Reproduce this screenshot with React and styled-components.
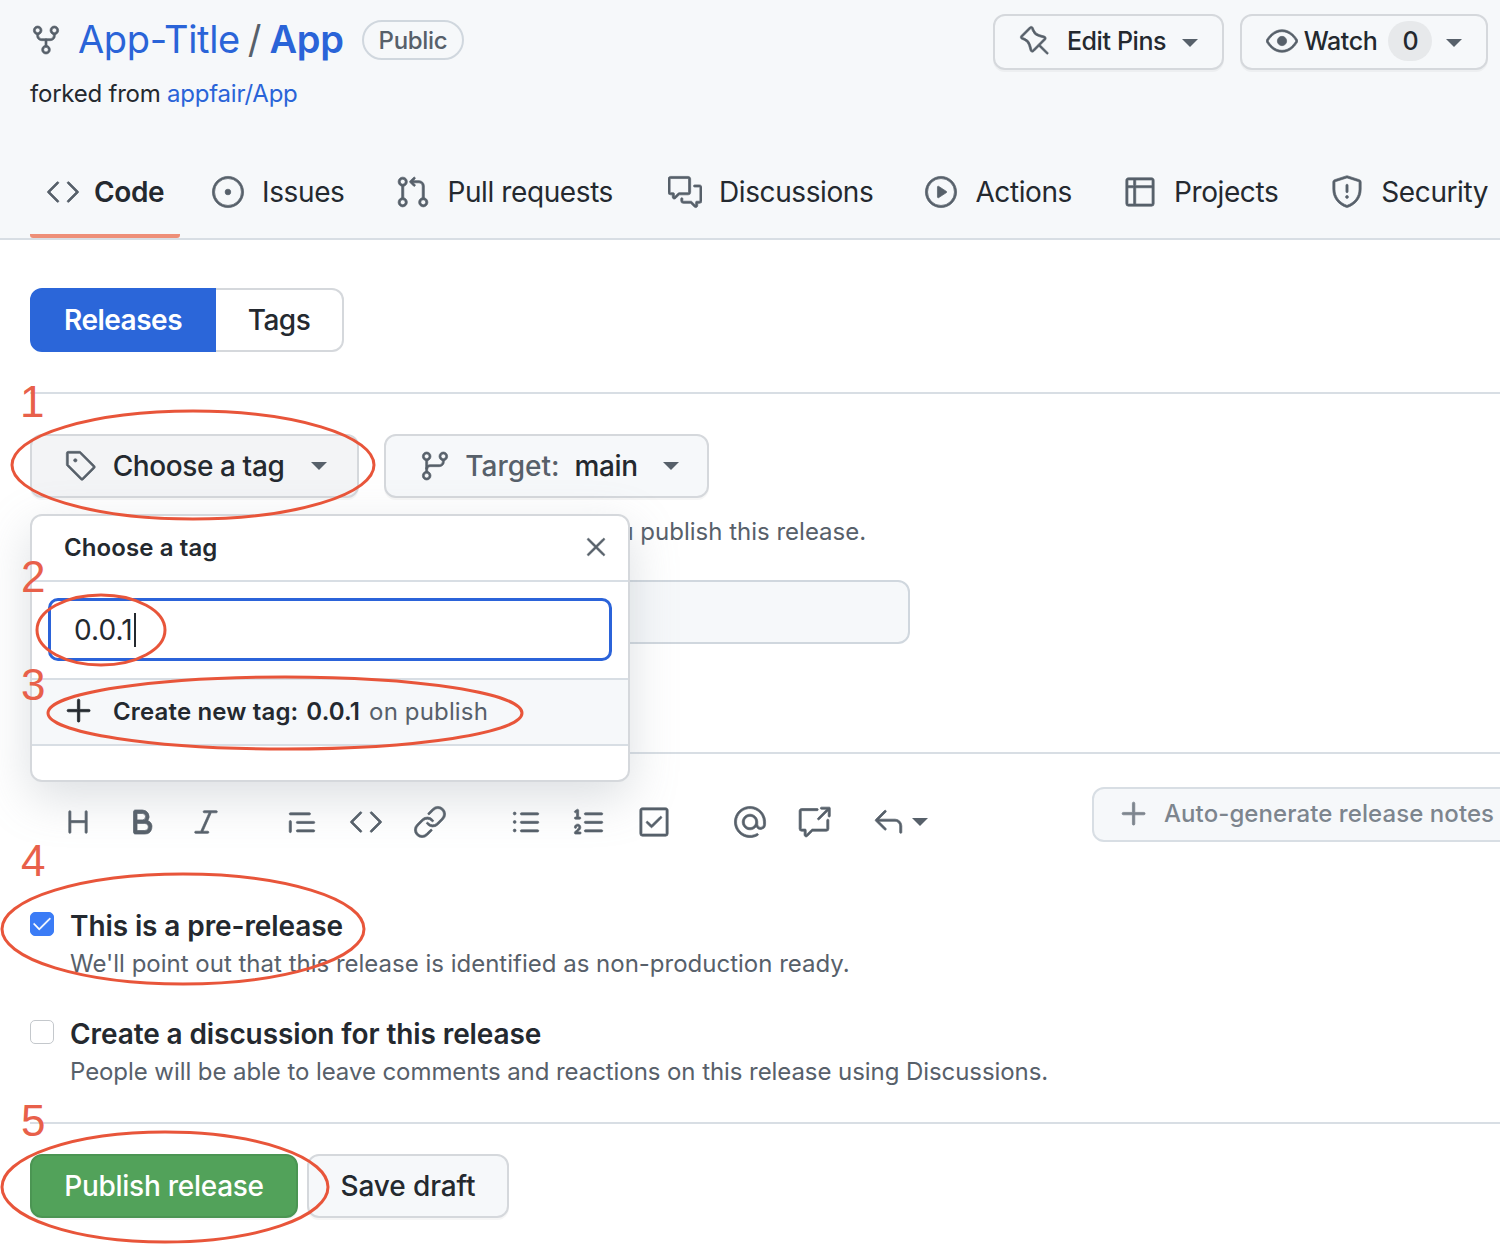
import React from 'react';
import styled, { createGlobalStyle } from 'styled-components';
import {
  GoRepoForked, GoCode, GoIssueOpened, GoGitPullRequest, GoCommentDiscussion, GoPlay, GoTable,
  GoShield, GoPin, GoEye, GoTag, GoGitBranch, GoPlus, GoX, GoHeading, GoBold, GoItalic, GoQuote,
  GoLink, GoListUnordered, GoListOrdered, GoCheckbox, GoMention, GoCrossReference, GoReply, GoCheck,
} from 'react-icons/go';

const GlobalStyle = createGlobalStyle`
  html, body { margin: 0; padding: 0; background: #fff; }
  body { font-family: Inter, "Noto Sans", sans-serif; color: #24292f; }
  * { box-sizing: border-box; }
  svg { stroke-width: 0.5px; }
`;

const Page = styled.div`
  position: relative;
  width: 1500px;
  height: 1254px;
  overflow: hidden;
  background: #fff;
`;

const RepoHead = styled.header`
  height: 240px;
  background: #f6f8fa;
  border-bottom: 2px solid #d8dee4;
  display: flex;
  flex-direction: column;
  justify-content: space-between;
`;

const TopRow = styled.div`
  display: flex;
  justify-content: space-between;
  padding: 14px 12px 0 30px;
`;

const TitleBlock = styled.div`
  display: flex;
  flex-direction: column;
`;

const TitleRow = styled.div`
  display: flex;
  align-items: center;
  height: 52px;
  color: #57606a;
  svg { margin-right: 16px; color: #57606a; }
`;

const TitleLink = styled.a`
  margin-top: -2px;
  font-size: 38px;
  font-weight: ${(props) => (props.$bold ? 600 : 400)};
  letter-spacing: -0.35px;
  color: #2a64d8;
`;

const Slash = styled.span`
  margin: -2px 8px 0;
  font-size: 38px;
  color: #57606a;
`;

const Label = styled.span`
  margin-left: 18px;
  height: 40px;
  padding: 0 15px;
  display: flex;
  align-items: center;
  font-size: 24px;
  font-weight: 500;
  letter-spacing: -0.3px;
  color: #57606a;
  border: 2px solid #d0d7de;
  border-radius: 20px;
`;

const ForkNote = styled.div`
  margin-top: 13px;
  font-size: 24px;
  letter-spacing: -0.22px;
  line-height: 30px;
  a { color: #2a64d8; }
`;

const HeadActions = styled.div`
  display: flex;
  gap: 16px;
`;

const Button = styled.button`
  height: ${(props) => props.$h || 64}px;
  width: ${(props) => props.$w}px;
  padding: 0 0 0 ${(props) => props.$pl || 0}px;
  display: flex;
  align-items: center;
  justify-content: center;
  gap: ${(props) => props.$gap ?? 12}px;
  font-family: inherit;
  font-size: ${(props) => props.$size || 28}px;
  font-weight: 500;
  letter-spacing: ${(props) => props.$ls ?? -0.4}px;
  color: #24292f;
  background: ${(props) => props.$bg || '#f6f8fa'};
  border: 2px solid #d5d8dc;
  border-radius: 12px;
  box-shadow: 0 2px 0 rgba(27, 31, 36, 0.04);
  svg { color: #57606a; flex: none; }
`;

const HeadButton = styled(Button)`
  padding-bottom: 2px;
  i { margin-top: 4px; }
`;

const Counter = styled.span`
  width: 44px;
  height: 40px;
  margin-left: 5px;
  display: flex;
  align-items: center;
  justify-content: center;
  border-radius: 20px;
  background: #e7e9eb;
`;

const Caret = styled.i`
  display: block;
  flex: none;
  margin-left: ${(props) => props.$ml || 0}px;
  border-style: solid;
  border-width: 8px 8px 0;
  border-color: #57606a transparent transparent;
`;

const Tabs = styled.nav`
  height: 60px;
  margin: 0 0 -2px 30px;
  display: flex;
`;

const Tab = styled.a`
  display: flex;
  align-items: center;
  height: 70px;
  margin-top: -12px;
  margin-right: ${(props) => props.$space}px;
  padding: 0 16px 18px;
  gap: ${(props) => props.$gap}px;
  font-size: 28px;
  font-weight: ${(props) => (props.$active ? 600 : 400)};
  letter-spacing: -0.4px;
  white-space: nowrap;
  border-bottom: 4px solid ${(props) => (props.$active ? '#ee8f78' : 'transparent')};
  border-radius: 3px;
  svg { color: #57606a; flex: none; }
`;

const Main = styled.main`
  padding-left: 30px;
`;

const Segments = styled.div`
  margin-top: 48px;
  display: flex;
  width: 314px;
  height: 64px;
`;

const Segment = styled.div`
  width: ${(props) => props.$w}px;
  display: flex;
  align-items: center;
  justify-content: center;
  font-size: 28px;
  font-weight: ${(props) => (props.$on ? 600 : 500)};
  letter-spacing: -0.5px;
  color: ${(props) => (props.$on ? '#fff' : '#24292f')};
  background: ${(props) => (props.$on ? '#2b66d9' : '#fff')};
  border: 2px solid ${(props) => (props.$on ? '#2b66d9' : '#d5d8dc')};
  border-left-width: ${(props) => (props.$on ? 2 : 0)}px;
  border-radius: ${(props) => (props.$on ? '12px 0 0 12px' : '0 12px 12px 0')};
`;

const Rule = styled.hr`
  margin: ${(props) => props.$top}px 0 0;
  height: 2px;
  border: 0;
  background: #d8dee4;
`;

const TagSection = styled.section`
  position: relative;
`;

const TagButtons = styled.div`
  margin-top: 40px;
  display: flex;
  gap: 25px;
`;

const Muted = styled.span`
  margin-right: 8px;
  letter-spacing: 0;
  color: #57606a;
`;

const Hint = styled.p`
  margin: 20px 0 0;
  padding-left: 562px;
  font-size: 24px;
  line-height: 28px;
  letter-spacing: 0;
  color: #57606a;
  white-space: nowrap;
`;

const TitleInput = styled.div`
  margin-top: 34px;
  width: 880px;
  height: 64px;
  background: #f6f8fa;
  border: 2px solid #d0d7de;
  border-radius: 12px;
`;

const TagMenu = styled.div`
  position: absolute;
  left: 0;
  top: 80px;
  width: 600px;
  height: 268px;
  background: #fff;
  border: 2px solid #d5d8dc;
  border-radius: 12px;
  box-shadow: 0 16px 48px rgba(140, 149, 159, 0.3);
  display: flex;
  flex-direction: column;
`;

const MenuHead = styled.div`
  height: 66px;
  flex: none;
  padding: 0 16px 2px 32px;
  display: flex;
  align-items: center;
  justify-content: space-between;
  font-size: 24px;
  font-weight: 600;
  letter-spacing: 0.1px;
  border-bottom: 2px solid #d8dee4;
  svg { color: #57606a; }
`;

const MenuField = styled.div`
  height: 98px;
  flex: none;
  padding: 16px 16px 17px;
  border-bottom: 2px solid #d8dee4;
`;

const FieldBox = styled.div`
  height: 63px;
  padding-left: 23px;
  display: flex;
  align-items: center;
  font-size: 28px;
  letter-spacing: 0.1px;
  border: 3px solid #2b63d9;
  border-radius: 10px;
`;

const Cursor = styled.i`
  width: 2px;
  height: 34px;
  margin-left: 1px;
  background: #24292f;
`;

const MenuItem = styled.div`
  height: 66px;
  flex: none;
  padding: 0 0 2px 28px;
  display: flex;
  align-items: center;
  gap: 15px;
  font-size: 24px;
  font-weight: 600;
  letter-spacing: 0.15px;
  background: #f6f8fa;
  border-bottom: 2px solid #d8dee4;
  white-space: nowrap;
  svg { color: #24292f; flex: none; }
  b { font-weight: 600; margin-left: 8px; }
`;

const OnPublish = styled.span`
  margin-left: 9px;
  font-weight: 400;
  color: #57606a;
`;

const EditorBar = styled.div`
  margin: 33px 0 0 16px;
  height: 55px;
  display: flex;
  justify-content: space-between;
`;

const Tools = styled.div`
  display: flex;
  gap: 32px;
  padding-top: 17px;
`;

const ToolGroup = styled.div`
  display: flex;
`;

const Tool = styled.span`
  width: 64px;
  height: 36px;
  display: flex;
  align-items: center;
  justify-content: center;
  color: #57606a;
`;

const ReplyTool = styled(Tool)`
  width: 110px;
  padding-left: 25px;
  justify-content: flex-start;
  gap: 7px;
`;

const AutoNotes = styled.div`
  width: 430px;
  margin-right: -22px;
  height: 55px;
  display: flex;
  align-items: center;
  padding: 0 0 2px 21px;
  gap: 11px;
  font-size: 24px;
  font-weight: 500;
  letter-spacing: 0.08px;
  white-space: nowrap;
  color: #7d858e;
  background: #f6f8fa;
  border: 2px solid #d8dee4;
  border-radius: 12px;
`;

const CheckRow = styled.div`
  margin-top: ${(props) => props.$top}px;
  display: grid;
  grid-template-columns: 40px 1fr;
`;

const CheckBox = styled.span`
  margin-top: 4px;
  width: 24px;
  height: 24px;
  display: flex;
  align-items: center;
  justify-content: center;
  color: #fff;
  border-radius: 5px;
  background: ${(props) => (props.$on ? '#3b7cf6' : '#fff')};
  border: 1px solid ${(props) => (props.$on ? '#3b7cf6' : '#c4c8cc')};
`;

const CheckTitle = styled.div`
  font-size: 28px;
  font-weight: 600;
  line-height: 36px;
  letter-spacing: -0.1px;
`;

const CheckNote = styled.div`
  margin-top: 2px;
  font-size: 24px;
  line-height: 36px;
  letter-spacing: ${(props) => props.$ls}px;
  color: #57606a;
  white-space: nowrap;
`;

const SubmitRow = styled.div`
  margin-top: 30px;
  display: flex;
  gap: 9px;
`;

const PublishButton = styled(Button)`
  color: #fff;
  background: #52a25a;
  border-color: #4b9553;
`;

const Marks = styled.svg`
  position: absolute;
  inset: 0;
  pointer-events: none;
  stroke-width: 3px;
`;

const StepNumber = styled.span`
  position: absolute;
  left: ${(props) => props.$x}px;
  top: ${(props) => props.$y}px;
  font-family: "Liberation Sans", sans-serif;
  font-size: 44px;
  line-height: 44px;
  color: #e8604a;
`;

const headTabs = [
  { label: 'Code', icon: GoCode, active: true, gap: 14, space: 15 },
  { label: 'Issues', icon: GoIssueOpened, gap: 17, space: 20 },
  { label: 'Pull requests', icon: GoGitPullRequest, gap: 17, space: 23 },
  { label: 'Discussions', icon: GoCommentDiscussion, gap: 17, space: 19 },
  { label: 'Actions', icon: GoPlay, gap: 17, space: 19 },
  { label: 'Projects', icon: GoTable, gap: 17, space: 20 },
  { label: 'Security', icon: GoShield, gap: 17, space: 0 },
];

const toolGroups = [
  [GoHeading, GoBold, GoItalic],
  [GoQuote, GoCode, GoLink],
  [GoListUnordered, GoListOrdered, GoCheckbox],
];

const ellipses = [
  [193, 465, 181, 54],
  [101, 630, 64, 35],
  [285, 713, 237, 36],
  [183, 929, 181, 55],
  [165, 1187, 163, 55],
];

const steps = [
  ['1', 20, 380],
  ['2', 21, 555],
  ['3', 21, 663],
  ['4', 21, 839],
  ['5', 21, 1099],
];

export default function App() {
  return (
    <Page>
      <GlobalStyle />
      <RepoHead>
        <TopRow>
          <TitleBlock>
            <TitleRow>
              <GoRepoForked size={32} />
              <TitleLink>App-Title</TitleLink>
              <Slash>/</Slash>
              <TitleLink $bold>App</TitleLink>
              <Label>Public</Label>
            </TitleRow>
            <ForkNote>forked from <a>appfair/App</a></ForkNote>
          </TitleBlock>
          <HeadActions>
            <HeadButton $w={231} $h={56} $size={25} $gap={16}>
              <GoPin size={32} />
              Edit Pins
              <Caret />
            </HeadButton>
            <HeadButton $w={248} $h={56} $size={25} $gap={6}>
              <GoEye size={32} />
              Watch
              <Counter>0</Counter>
              <Caret $ml={8} />
            </HeadButton>
          </HeadActions>
        </TopRow>
        <Tabs>
          {headTabs.map(({ label, icon: Icon, active, gap, space }) => (
            <Tab key={label} $active={active} $gap={gap} $space={space}>
              <Icon size={34} />
              {label}
            </Tab>
          ))}
        </Tabs>
      </RepoHead>

      <Main>
        <Segments>
          <Segment $w={186} $on>Releases</Segment>
          <Segment $w={128}>Tags</Segment>
        </Segments>
        <Rule $top={40} />

        <TagSection>
          <TagButtons>
            <Button $w={329} $bg="#f3f4f6" $gap={16} $pl={3}>
              <GoTag size={32} />
              Choose a tag
              <Caret $ml={11} />
            </Button>
            <Button $w={325} $gap={14} $pl={5}>
              <GoGitBranch size={32} />
              <span><Muted>Target:</Muted> main</span>
              <Caret $ml={11} />
            </Button>
          </TagButtons>
          <Hint>you publish this release.</Hint>
          <TitleInput />
          <TagMenu>
            <MenuHead>
              Choose a tag
              <GoX size={32} />
            </MenuHead>
            <MenuField>
              <FieldBox>0.0.1<Cursor /></FieldBox>
            </MenuField>
            <MenuItem>
              <GoPlus size={38} />
              <div>Create new tag:<b>0.0.1</b><OnPublish>on publish</OnPublish></div>
            </MenuItem>
          </TagMenu>
        </TagSection>
        <Rule $top={108} />

        <EditorBar>
          <Tools>
            {toolGroups.map((group, i) => (
              <ToolGroup key={i}>
                {group.map((Icon, j) => (
                  <Tool key={j}><Icon size={34} /></Tool>
                ))}
              </ToolGroup>
            ))}
            <ToolGroup>
              <Tool><GoMention size={34} /></Tool>
              <Tool><GoCrossReference size={34} /></Tool>
              <ReplyTool><GoReply size={34} /><Caret /></ReplyTool>
            </ToolGroup>
          </Tools>
          <AutoNotes>
            <GoPlus size={38} />
            Auto-generate release notes
          </AutoNotes>
        </EditorBar>

        <CheckRow $top={66}>
          <CheckBox $on><GoCheck size={22} /></CheckBox>
          <div>
            <CheckTitle>This is a pre-release</CheckTitle>
            <CheckNote $ls={0}>We'll point out that this release is identified as non-production ready.</CheckNote>
          </div>
        </CheckRow>
        <CheckRow $top={34}>
          <CheckBox />
          <div>
            <CheckTitle>Create a discussion for this release</CheckTitle>
            <CheckNote $ls={-0.07}>People will be able to leave comments and reactions on this release using Discussions.</CheckNote>
          </div>
        </CheckRow>
        <Rule $top={32} />

        <SubmitRow>
          <PublishButton $w={268} $ls={-0.27}>Publish release</PublishButton>
          <Button $w={202} $ls={-0.1}>Save draft</Button>
        </SubmitRow>
      </Main>

      <Marks width="1500" height="1254" fill="none" stroke="#e8553a">
        {ellipses.map(([cx, cy, rx, ry]) => (
          <ellipse key={cx} cx={cx} cy={cy} rx={rx} ry={ry} />
        ))}
      </Marks>
      {steps.map(([n, x, y]) => (
        <StepNumber key={n} $x={x} $y={y}>{n}</StepNumber>
      ))}
    </Page>
  );
}
